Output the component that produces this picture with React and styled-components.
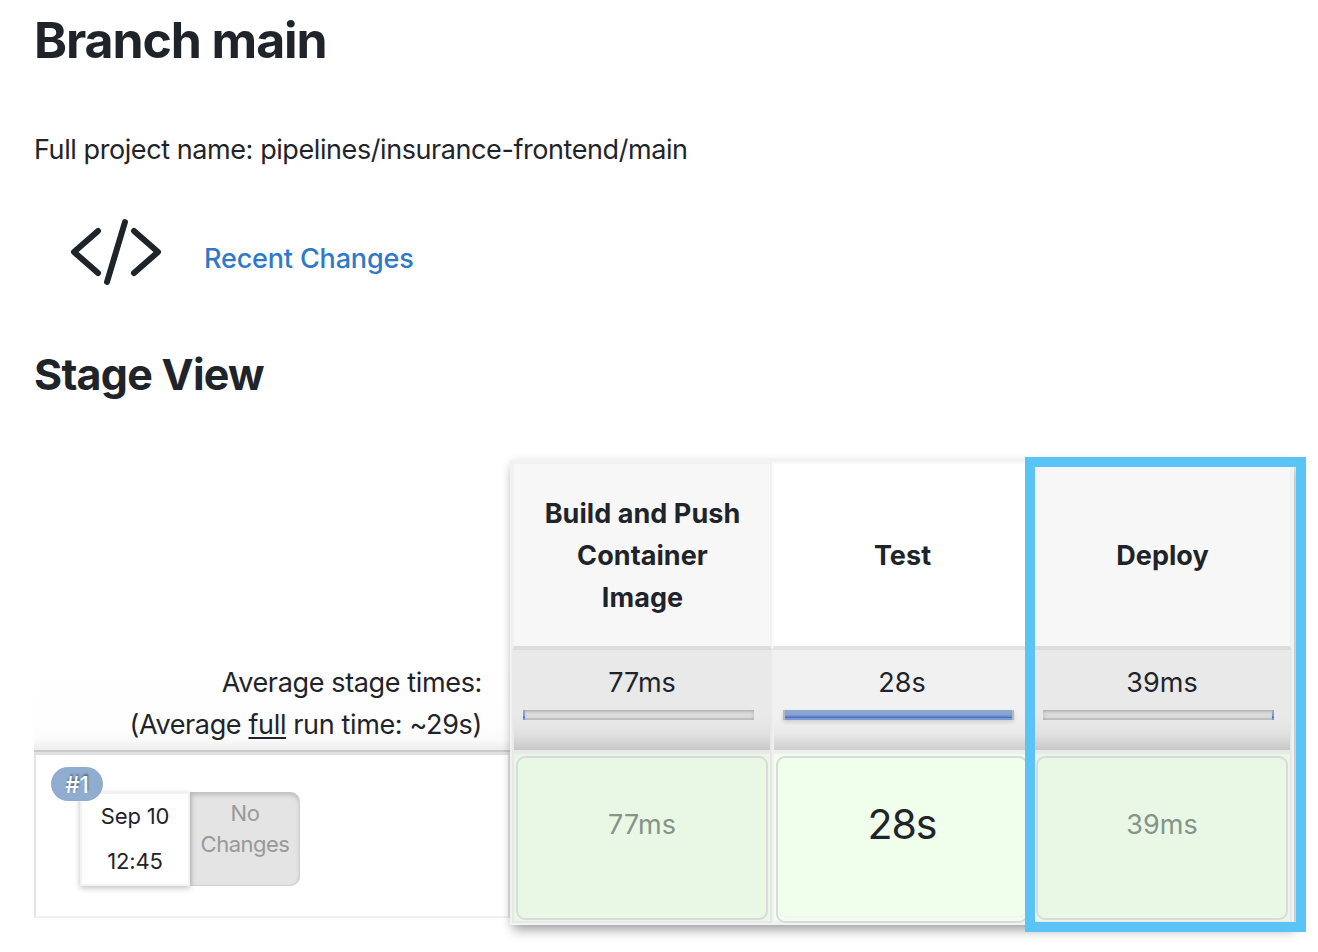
import React from "react";
import styled, { createGlobalStyle } from "styled-components";

const GlobalStyle = createGlobalStyle`
  *, *::before, *::after { box-sizing: border-box; }
  body {
    margin: 0;
    background: #fff;
    color: #1f242b;
    font-family: Inter, "Liberation Sans", sans-serif;
    font-size: 27px;
    line-height: 42px;
    overflow: hidden;
  }
  h1, h2, p { margin: 0; }
`;

const Page = styled.main`
  padding: 10px 0 0 34px;
  height: 952px;
  overflow: hidden;
`;

const Title = styled.h1`
  font-size: 50px;
  line-height: 60px;
  font-weight: 700;
  letter-spacing: -1.1px;
`;

const ProjectName = styled.p`
  padding-top: 59px;
  letter-spacing: -0.42px;
`;

const ChangesRow = styled.div`
  display: flex;
  align-items: center;
  gap: 40px;
  margin-top: 33px;
  padding-left: 34px;
`;

const CodeIcon = styled.svg`
  width: 96px;
  height: 96px;
  fill: none;
  stroke: currentColor;
  stroke-width: 32;
  stroke-linecap: round;
  stroke-linejoin: round;
`;

const ChangesLink = styled.a`
  padding-top: 14px;
  color: #3079c8;
  font-weight: 500;
  letter-spacing: -0.16px;
  text-decoration: none;
`;

const SectionTitle = styled.h2`
  padding-top: 48px;
  font-size: 43px;
  line-height: 52px;
  font-weight: 700;
  letter-spacing: -0.75px;
`;

const StageView = styled.div`
  display: grid;
  grid-template-columns: 476px 784px;
  height: 465px;
  margin-top: 60px;
`;

const BuildColumn = styled.div`
  display: flex;
  flex-direction: column;
  padding-top: 190px;
`;

const AverageSummary = styled.div`
  height: 105px;
  padding: 12px 28px 0 0;
  text-align: right;
  letter-spacing: -0.36px;
  background: linear-gradient(#fff 0%, #fefefe 75%, #fafafa 88%, #eaeaea 100%);
  border-bottom: 3px solid #e0e0e0;
  box-shadow: inset 0 -2px 0 #cacaca;

  u {
    text-decoration-thickness: 2px;
    text-underline-offset: 3px;
    text-decoration-skip-ink: none;
  }
`;

const BuildRow = styled.div`
  position: relative;
  height: 163px;
  padding: 37px 0 0 44px;
  border: 2px solid #e4e4e4;
  border-top: 0;
  border-bottom-color: #f0f0f0;
`;

const BuildCard = styled.div`
  display: flex;
  height: 94px;
  font-size: 22px;
  line-height: 31px;
  text-align: center;
`;

const BuildDate = styled.div`
  display: flex;
  flex-direction: column;
  gap: 14px;
  width: 110px;
  padding-top: 7px;
  letter-spacing: -0.15px;
  background: #fff;
  border: 2px solid #f1f1f6;
  box-shadow: 0 2px 6px rgba(0, 0, 0, 0.25);
  z-index: 1;
`;

const NoChanges = styled.div`
  width: 110px;
  padding: 6px 5px 0;
  color: #999;
  letter-spacing: -0.5px;
  background: #e4e4e4;
  border-radius: 0 10px 10px 0;
  box-shadow: inset -1px -1px 1px #d0d0d0, inset 0 3px 4px #bdbdbd;
`;

const BuildBadge = styled.span`
  position: absolute;
  z-index: 2;
  left: 15px;
  top: 12px;
  width: 52px;
  height: 34px;
  border-radius: 17px;
  background: #90add0;
  color: #fff;
  font-size: 22.5px;
  font-weight: 500;
  line-height: 35px;
  letter-spacing: 0;
  text-align: center;
  text-shadow: 1px -2px 2px rgba(0, 0, 0, 0.4);
`;

const StagePanel = styled.div`
  position: relative;
  display: grid;
  grid-template-columns: repeat(3, 260px);
  border: 2px solid #f1f1f6;
  box-shadow: 2px 6px 11px -1px rgba(0, 0, 0, 0.36), 0 0 8px rgba(0, 0, 0, 0.05);
`;

const StageColumn = styled.section`
  display: flex;
  flex-direction: column;
  text-align: center;
  background: ${(p) => (p.$light ? "#f7f7f7" : "#efeff0")};
`;

const StageName = styled.div`
  display: flex;
  align-items: center;
  justify-content: center;
  height: 188px;
  padding: 2px 25px 0 26px;
  font-weight: 700;
  letter-spacing: 0.06px;
  background: ${(p) => (p.$light ? "#fff" : "#f7f7f7")};
  border: 2px solid ${(p) => (p.$light ? "#f9f9f9" : "#f1f1f2")};
  border-bottom: 4px solid ${(p) => (p.$light ? "#e3e3e3" : "#dcdcdc")};
`;

const StageAverage = styled.div`
  height: 104px;
  padding: 12px 9px 0;
  border: solid ${(p) => (p.$light ? "#efefef" : "#e9e9e9")};
  border-width: 0 2px 4px;
  background: ${(p) =>
    p.$light
      ? "linear-gradient(#f1f1f1 0%, #f1f1f1 66%, #e9e9e9 84%, #cecece 100%)"
      : "linear-gradient(#e9e9e9 0%, #e9e9e9 66%, #e1e1e1 84%, #c8c8c8 100%)"};
  background-clip: padding-box;
`;

const TimeBar = styled.div`
  display: flex;
  width: 231px;
  height: 10px;
  margin-top: 6px;
  justify-content: ${(p) => (p.$align === "end" ? "flex-end" : "flex-start")};
  padding: ${(p) => (p.$align === "full" ? "0 2px" : "0")};
  background: ${(p) =>
    p.$align === "full"
      ? "#b8b8b8"
      : "linear-gradient(#c0c0c0, #dbdbdb 35%, #dcdcdc 75%, #cacaca 82%)"};
  box-shadow: ${(p) =>
    p.$align === "full"
      ? "0 2px 4px rgba(0, 0, 0, 0.14)"
      : "inset 0 0 4px rgba(0, 0, 0, 0.16)"};
`;

const TimeFill = styled.span`
  width: ${(p) => (p.$full ? "100%" : "2px")};
  background: linear-gradient(#8aa9d2 0%, #86a4d0 45%, #6484c8 68%, #4c6cc1 76%, #7c9ad4 80%);
`;

const StageResult = styled.div`
  height: 169px;
  padding: 2px;
  background: ${(p) => (p.$light ? "#f0ffeb" : "#e9f8e4")};
  background-clip: padding-box;
  border: solid ${(p) => (p.$light ? "#f1f1f2" : "#e8e6e9")};
  border-width: 0 2px 2px;
`;

const ResultCard = styled.div`
  display: flex;
  justify-content: center;
  height: ${(p) => (p.$light ? "167px" : "164px")};
  padding-top: ${(p) => (p.$light ? "45px" : "46px")};
  border: 2px solid #dadadc;
  border-radius: 9px;
  color: ${(p) => (p.$light ? "#1f242b" : "#859389")};
  font-size: ${(p) => (p.$light ? "41px" : "27px")};
  letter-spacing: ${(p) => (p.$light ? "-1px" : "0.1px")};
  box-shadow: ${(p) =>
    p.$light ? "inset 0 -3px 0 #f0ffeb, inset 0 -5px 0 #f3f3f5" : "none"};
`;

const Highlight = styled.div`
  position: absolute;
  left: 513px;
  top: -5px;
  width: 281px;
  height: 475px;
  border: 10px solid #5bc4f7;
`;

const stages = [
  { name: "Build and Push Container Image", time: "77ms", align: "start" },
  { name: "Test", time: "28s", align: "full", light: true },
  { name: "Deploy", time: "39ms", align: "end" },
];

export default function App() {
  return (
    <Page>
      <GlobalStyle />
      <Title>Branch main</Title>
      <ProjectName>Full project name: pipelines/insurance-frontend/main</ProjectName>
      <ChangesRow>
        <CodeIcon viewBox="0 0 512 512">
          <path d="M160 368L32 256l128-112M352 368l128-112-128-112M304 96l-96 320" />
        </CodeIcon>
        <ChangesLink>Recent Changes</ChangesLink>
      </ChangesRow>
      <SectionTitle>Stage View</SectionTitle>
      <StageView>
        <BuildColumn>
          <AverageSummary>
            <div>Average stage times:</div>
            <div>
              (Average <u>full</u> run time: ~29s)
            </div>
          </AverageSummary>
          <BuildRow>
            <BuildCard>
              <BuildDate>
                <span>Sep 10</span>
                <span>12:45</span>
              </BuildDate>
              <NoChanges>No Changes</NoChanges>
            </BuildCard>
            <BuildBadge>#1</BuildBadge>
          </BuildRow>
        </BuildColumn>
        <StagePanel>
          {stages.map((s) => (
            <StageColumn key={s.name} $light={s.light}>
              <StageName $light={s.light}>{s.name}</StageName>
              <StageAverage $light={s.light}>
                {s.time}
                <TimeBar $align={s.align}>
                  <TimeFill $full={s.align === "full"} />
                </TimeBar>
              </StageAverage>
              <StageResult $light={s.light}>
                <ResultCard $light={s.light}>{s.time}</ResultCard>
              </StageResult>
            </StageColumn>
          ))}
          <Highlight />
        </StagePanel>
      </StageView>
    </Page>
  );
}
